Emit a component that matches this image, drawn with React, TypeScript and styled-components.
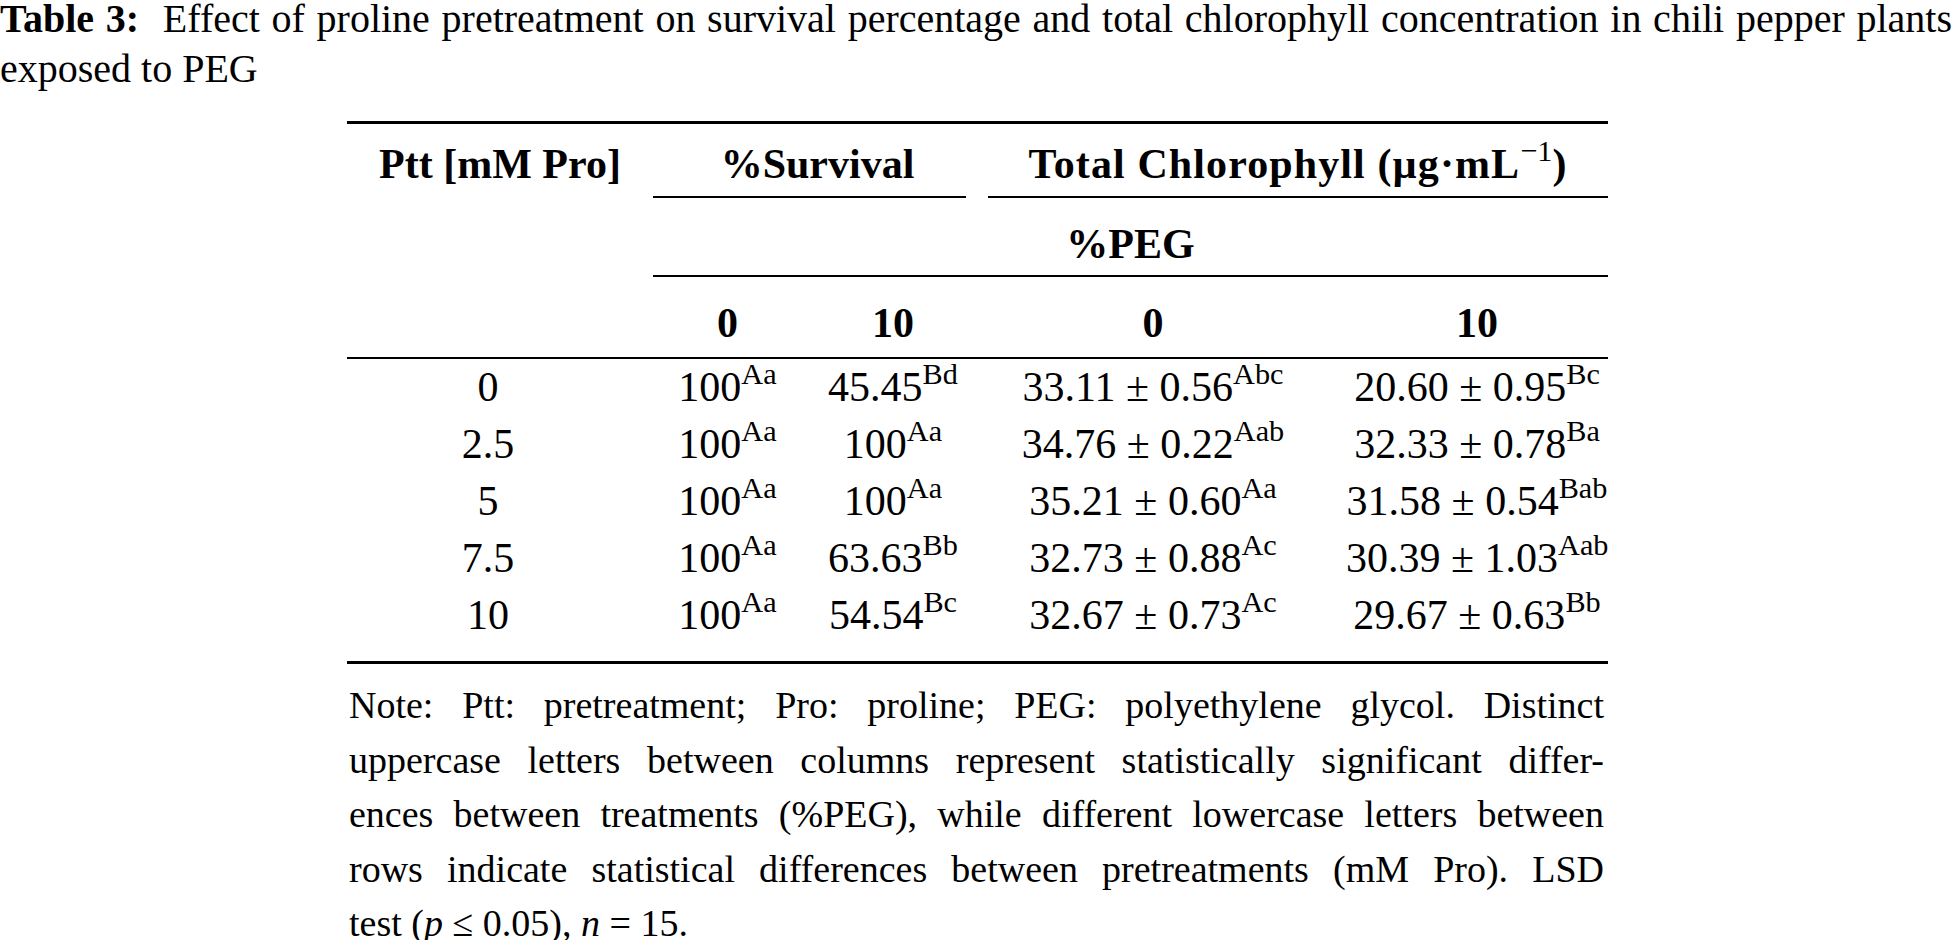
import React from "react";
import styled, { createGlobalStyle } from "styled-components";

const Global = createGlobalStyle`
  html, body { margin: 0; padding: 0; background: #ffffff; }
  body { font-family: "Liberation Serif", "Times New Roman", serif; color: #000; }
`;

const Page = styled.div`
  width: 1954px;
  height: 940px;
  overflow: hidden;
  font-family: "Liberation Serif", "Times New Roman", serif;
  color: #000;
`;

const Caption = styled.div`
  width: 1952px;
  font-size: 40px;
`;

const CaptionLine = styled.div<{ $justify?: boolean; $lh: number }>`
  white-space: nowrap;
  line-height: ${(p) => p.$lh}px;
  text-align: ${(p) => (p.$justify ? "justify" : "left")};
  text-align-last: ${(p) => (p.$justify ? "justify" : "left")};
`;

const CaptionLabel = styled.b`
  font-weight: 700;
  margin-right: 12px;
`;

const Table = styled.div`
  margin: 21px 0 0 347px;
  width: 1261px;
  border-top: 3px solid #000;
  border-bottom: 3px solid #000;
  padding-bottom: 17px;
  font-size: 42px;
`;

const COLS = "298px 165px 166px 354px 278px";

const HeadRow = styled.div<{ $ruled?: boolean }>`
  display: grid;
  grid-template-columns: ${COLS};
  line-height: 46px;
  font-weight: 700;
  border-bottom: ${(p) => (p.$ruled ? "2px solid #000" : "none")};
`;

const HeadCell = styled.div<{
  $span?: number;
  $rule?: boolean;
  $ml?: number;
  $mr?: number;
  $pt: number;
  $pb: number;
  $pl?: number;
  $pr?: number;
  $ls?: number;
}>`
  grid-column: span ${(p) => p.$span ?? 1};
  text-align: center;
  white-space: nowrap;
  letter-spacing: ${(p) => p.$ls ?? 0}px;
  padding: ${(p) => `${p.$pt}px ${p.$pr ?? 0}px ${p.$pb}px ${p.$pl ?? 0}px`};
  margin-left: ${(p) => p.$ml ?? 0}px;
  margin-right: ${(p) => p.$mr ?? 0}px;
  border-bottom: ${(p) => (p.$rule ? "2px solid #000" : "none")};
`;

const BodyRow = styled.div`
  display: grid;
  grid-template-columns: ${COLS};
  line-height: 57px;
`;

const Cell = styled.div<{ $pl?: number; $pr?: number }>`
  text-align: center;
  white-space: nowrap;
  padding-left: ${(p) => p.$pl ?? 0}px;
  padding-right: ${(p) => p.$pr ?? 0}px;
`;

const Sup = styled.sup<{ $weight?: number }>`
  font-size: 0.72em;
  line-height: 0;
  vertical-align: 0.57em;
  letter-spacing: 0;
  font-weight: ${(p) => p.$weight ?? 400};
`;

const Note = styled.div`
  margin: 14px 0 0 349px;
  width: 1255px;
  font-size: 38px;
`;

const NoteLine = styled.div<{ $last?: boolean }>`
  white-space: nowrap;
  line-height: ${(p) => (p.$last ? "34px" : "54.5px")};
  margin-top: ${(p) => (p.$last ? "10px" : "0")};
  text-align: ${(p) => (p.$last ? "left" : "justify")};
  text-align-last: ${(p) => (p.$last ? "left" : "justify")};
`;

const I = styled.i`
  font-style: italic;
`;

type Row = { ptt: string; s0: [string, string]; s10: [string, string]; c0: [string, string]; c10: [string, string] };

const rows: Row[] = [
  { ptt: "0", s0: ["100", "Aa"], s10: ["45.45", "Bd"], c0: ["33.11 ± 0.56", "Abc"], c10: ["20.60 ± 0.95", "Bc"] },
  { ptt: "2.5", s0: ["100", "Aa"], s10: ["100", "Aa"], c0: ["34.76 ± 0.22", "Aab"], c10: ["32.33 ± 0.78", "Ba"] },
  { ptt: "5", s0: ["100", "Aa"], s10: ["100", "Aa"], c0: ["35.21 ± 0.60", "Aa"], c10: ["31.58 ± 0.54", "Bab"] },
  { ptt: "7.5", s0: ["100", "Aa"], s10: ["63.63", "Bb"], c0: ["32.73 ± 0.88", "Ac"], c10: ["30.39 ± 1.03", "Aab"] },
  { ptt: "10", s0: ["100", "Aa"], s10: ["54.54", "Bc"], c0: ["32.67 ± 0.73", "Ac"], c10: ["29.67 ± 0.63", "Bb"] },
];

const Val = ({ v }: { v: [string, string] }) => (
  <>
    {v[0]}
    <Sup>{v[1]}</Sup>
  </>
);

export default function App() {
  return (
    <Page>
      <Global />
      <Caption>
        <CaptionLine $justify $lh={37}>
          <CaptionLabel>Table 3:</CaptionLabel> Effect of proline pretreatment on survival percentage and total
          chlorophyll concentration in chili pepper plants
        </CaptionLine>
        <CaptionLine $lh={63}>exposed to PEG</CaptionLine>
      </Caption>

      <Table>
        <HeadRow>
          <HeadCell $pt={17} $pb={9} $pl={8}>
            Ptt [mM Pro]
          </HeadCell>
          <HeadCell $span={2} $rule $ml={8} $mr={10} $pt={17} $pb={9} $pl={16}>
            %Survival
          </HeadCell>
          <HeadCell $span={2} $rule $ml={12} $pt={17} $pb={9} $ls={1.1}>
            Total Chlorophyll (µg·mL
            <Sup $weight={400}>−1</Sup>)
          </HeadCell>
        </HeadRow>
        <HeadRow>
          <HeadCell $pt={23} $pb={8} />
          <HeadCell $span={4} $rule $ml={8} $pt={23} $pb={8}>
            %PEG
          </HeadCell>
        </HeadRow>
        <HeadRow $ruled>
          <HeadCell $pt={23} $pb={11} />
          <HeadCell $pt={23} $pb={11}>0</HeadCell>
          <HeadCell $pt={23} $pb={11}>10</HeadCell>
          <HeadCell $pt={23} $pb={11}>0</HeadCell>
          <HeadCell $pt={23} $pb={11} $pl={16}>10</HeadCell>
        </HeadRow>
        {rows.map((r) => (
          <BodyRow key={r.ptt}>
            <Cell $pr={16}>{r.ptt}</Cell>
            <Cell>
              <Val v={r.s0} />
            </Cell>
            <Cell>
              <Val v={r.s10} />
            </Cell>
            <Cell>
              <Val v={r.c0} />
            </Cell>
            <Cell $pl={16}>
              <Val v={r.c10} />
            </Cell>
          </BodyRow>
        ))}
      </Table>

      <Note>
        <NoteLine>Note: Ptt: pretreatment; Pro: proline; PEG: polyethylene glycol. Distinct</NoteLine>
        <NoteLine>uppercase letters between columns represent statistically significant differ-</NoteLine>
        <NoteLine>ences between treatments (%PEG), while different lowercase letters between</NoteLine>
        <NoteLine>rows indicate statistical differences between pretreatments (mM Pro). LSD</NoteLine>
        <NoteLine $last>
          test (<I>p</I> ≤ 0.05), <I>n</I> = 15.
        </NoteLine>
      </Note>
    </Page>
  );
}
